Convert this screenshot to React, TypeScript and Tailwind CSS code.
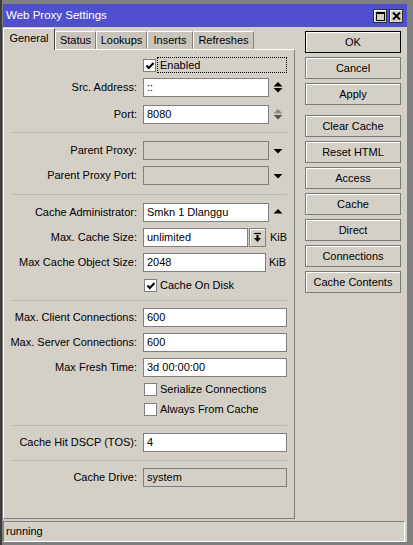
import React from "react";

const checkPath = "M2.5 5.5 L4.8 8 L9.5 3";

function CheckBox({ checked }: { checked?: boolean }) {
  return (
    <div className="flex h-[13px] w-[13px] shrink-0 items-center justify-center border border-[#808080] bg-white">
      {checked && (
        <svg width="11" height="11" viewBox="0 0 11 11">
          <path d={checkPath} fill="none" stroke="#000" strokeWidth="2" />
        </svg>
      )}
    </div>
  );
}

function Box({ w, value, disabled }: { w: string; value?: string; disabled?: boolean }) {
  return (
    <div
      className={`${w} flex h-[19px] shrink-0 items-center overflow-hidden whitespace-nowrap border border-[#7f7f7f] pl-[3px] ${
        disabled ? "bg-[#d4d0c8]" : "bg-white"
      }`}
    >
      {value}
    </div>
  );
}

function Row({ label, mt, children }: { label: string; mt: string; children: React.ReactNode }) {
  return (
    <div className={`flex h-[19px] items-center ${mt}`}>
      <div className="w-[133px] shrink-0 whitespace-nowrap text-right">{label}</div>
      <div className="ml-[6px] flex items-center">{children}</div>
    </div>
  );
}

function Spinner({ dim }: { dim?: boolean }) {
  return (
    <svg width="10" height="19" viewBox="0 0 10 19" className="ml-[4px]">
      <path d="M0.5 8.5 L5 4 L9.5 8.5Z" fill={dim ? "#8a8a8a" : "#000"} />
      <path d="M0.5 10 L9.5 10 L5 14.5Z" fill={dim ? "#555" : "#000"} />
    </svg>
  );
}

function DownArrow() {
  return (
    <svg width="10" height="19" viewBox="0 0 10 19" className="ml-[4px]">
      <path d="M0.5 8 L9.5 8 L5 12.5Z" fill="#000" />
    </svg>
  );
}

function UpArrow() {
  return (
    <svg width="10" height="19" viewBox="0 0 10 19" className="ml-[4px]">
      <path d="M0.5 10.5 L5 6 L9.5 10.5Z" fill="#000" />
    </svg>
  );
}

function Sep({ mt }: { mt: string }) {
  return <div className={`${mt} ml-[8px] h-px w-[275px] bg-[#bcb8b0]`} />;
}

function CheckRow({ label, checked, mt }: { label: string; checked?: boolean; mt: string }) {
  return (
    <div className={`flex h-[13px] items-center ${mt} pl-[140px]`}>
      <CheckBox checked={checked} />
      <span className="ml-[3px] whitespace-nowrap">{label}</span>
    </div>
  );
}

const buttons = [
  ["OK", "mt-[4px]"],
  ["Cancel", "mt-[4px]"],
  ["Apply", "mt-[4px]"],
  ["Clear Cache", "mt-[10px]"],
  ["Reset HTML", "mt-[4px]"],
  ["Access", "mt-[4px]"],
  ["Cache", "mt-[4px]"],
  ["Direct", "mt-[4px]"],
  ["Connections", "mt-[4px]"],
  ["Cache Contents", "mt-[4px]"],
];

const tabs = [
  ["Status", "w-[41px]"],
  ["Lookups", "w-[51px]"],
  ["Inserts", "w-[46px]"],
  ["Refreshes", "w-[61px]"],
];

export default function App() {
  return (
    <div className="h-[545px] w-[413px] overflow-hidden border-l-[2px] border-[#3c3c3c] bg-[#808080] pl-[1px] pr-[6px] pt-[4px] font-['Liberation_Sans',Arial,sans-serif] text-[11px] text-black">
      <div className="flex h-[538px] w-[404px] flex-col bg-[#d4d0c8]">
        {/* title bar */}
        <div className="flex h-[23px] shrink-0 items-center bg-[#5050cf] pl-[3px] pr-[4px]">
          <span className="text-[11.5px] text-white">Web Proxy Settings</span>
          <div className="ml-auto mt-[1px] flex gap-[2px]">
            <div className="flex h-[14px] w-[14px] items-center justify-center border border-[#303030] bg-[#d4d0c8] shadow-[inset_1px_1px_0_#fff]">
              <svg width="9" height="9" viewBox="0 0 9 9">
                <rect x="0.5" y="0.5" width="8" height="8" fill="none" stroke="#000" />
                <rect x="0" y="0" width="9" height="2" fill="#000" />
              </svg>
            </div>
            <div className="flex h-[14px] w-[14px] items-center justify-center border border-[#303030] bg-[#d4d0c8] shadow-[inset_1px_1px_0_#fff]">
              <svg width="9" height="8" viewBox="0 0 9 8">
                <path d="M1 0.5 L8 7.5 M8 0.5 L1 7.5" stroke="#000" strokeWidth="2" />
              </svg>
            </div>
          </div>
        </div>

        <div className="flex flex-1">
          {/* left column */}
          <div className="mt-[1px] flex w-[292px] flex-col">
            <div className="flex h-[21px] items-end">
              <div className="relative z-10 -mb-px flex h-[22px] w-[52px] items-center justify-center border-l border-r border-t border-l-white border-r-[#404040] border-t-white bg-[#d4d0c8] pb-[2px]">
                General
              </div>
              {tabs.map(([t, w]) => (
                <div
                  key={t}
                  className={`${w} flex h-[18px] items-center justify-center border-l border-r border-t border-l-white border-r-[#808080] border-t-white bg-[#c9c5bd]`}
                >
                  {t}
                </div>
              ))}
            </div>

            <div className="h-[470px] border border-b-[#808080] border-l-white border-r-[#808080] border-t-white">
              <div className="flex h-[16px] items-center pl-[139px] mt-[7px]">
                <CheckBox checked />
                <div className="ml-px flex h-[16px] w-[130px] items-center border border-dotted border-black pl-[2px]">
                  Enabled
                </div>
              </div>

              <Row label="Src. Address:" mt="mt-[5px]">
                <Box w="w-[126px]" value="::" />
                <Spinner />
              </Row>
              <Row label="Port:" mt="mt-[8px]">
                <Box w="w-[126px]" value="8080" />
                <Spinner dim />
              </Row>

              <Sep mt="mt-[8px]" />

              <Row label="Parent Proxy:" mt="mt-[8px]">
                <Box w="w-[126px]" disabled />
                <DownArrow />
              </Row>
              <Row label="Parent Proxy Port:" mt="mt-[6px]">
                <Box w="w-[126px]" disabled />
                <DownArrow />
              </Row>

              <Sep mt="mt-[9px]" />

              <Row label="Cache Administrator:" mt="mt-[8px]">
                <Box w="w-[126px]" value="Smkn 1 Dlanggu" />
                <UpArrow />
              </Row>
              <Row label="Max. Cache Size:" mt="mt-[6px]">
                <Box w="w-[105px]" value="unlimited" />
                <div className="ml-px flex h-[19px] w-[17px] items-center justify-center border border-[#808080] bg-[#d4d0c8] shadow-[inset_1px_1px_0_#fff]">
                  <svg width="9" height="11" viewBox="0 0 9 11">
                    <path d="M1 1.5 H8" stroke="#000" strokeWidth="1.2" />
                    <path d="M4.5 3 V6" stroke="#000" strokeWidth="2" />
                    <path d="M1 6 L8 6 L4.5 10Z" fill="#000" />
                  </svg>
                </div>
                <span className="ml-[4px]">KiB</span>
              </Row>
              <Row label="Max Cache Object Size:" mt="mt-[6px]">
                <Box w="w-[123px]" value="2048" />
                <span className="ml-[3px]">KiB</span>
              </Row>
              <CheckRow label="Cache On Disk" checked mt="mt-[7px]" />

              <Sep mt="mt-[8px]" />

              <Row label="Max. Client Connections:" mt="mt-[7px]">
                <Box w="w-[144px]" value="600" />
              </Row>
              <Row label="Max. Server Connections:" mt="mt-[6px]">
                <Box w="w-[144px]" value="600" />
              </Row>
              <Row label="Max Fresh Time:" mt="mt-[6px]">
                <Box w="w-[144px]" value="3d 00:00:00" />
              </Row>
              <CheckRow label="Serialize Connections" mt="mt-[6px]" />
              <CheckRow label="Always From Cache" mt="mt-[7px]" />

              <Sep mt="mt-[9px]" />

              <Row label="Cache Hit DSCP (TOS):" mt="mt-[7px]">
                <Box w="w-[144px]" value="4" />
              </Row>

              <Sep mt="mt-[8px]" />

              <Row label="Cache Drive:" mt="mt-[7px]">
                <Box w="w-[144px]" value="system" disabled />
              </Row>
            </div>
          </div>

          {/* buttons */}
          <div className="ml-[10px] flex w-[96px] flex-col">
            {buttons.map(([b, mt]) => (
              <div
                key={b}
                className={`${mt} flex h-[22px] items-center justify-center border ${
                  b === "OK" ? "border-black" : "border-[#7a7a7a]"
                } bg-[#d4d0c8] shadow-[inset_1px_1px_0_#fff]`}
              >
                {b}
              </div>
            ))}
          </div>
        </div>

        {/* status bar */}
        <div className="mb-px mr-[2px] mt-[2px] flex h-[21px] shrink-0 items-center border border-b-white border-l-[#808080] border-r-white border-t-[#808080] pl-[2px]">
          running
        </div>
      </div>
    </div>
  );
}
